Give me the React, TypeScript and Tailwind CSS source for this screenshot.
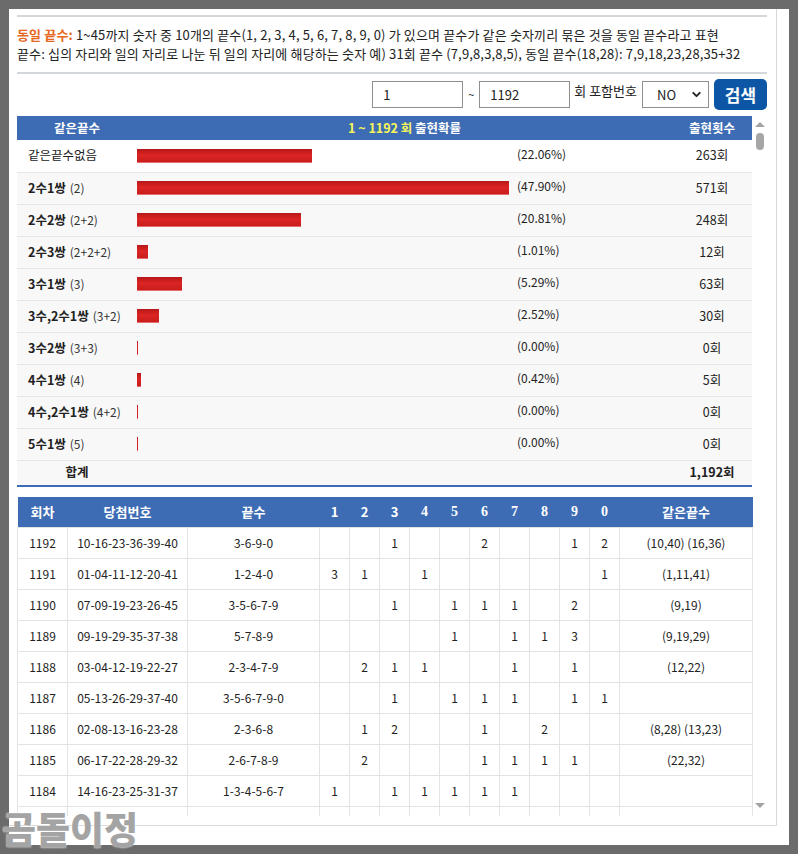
import { ChevronDown } from "lucide-react";

type StatRow = {
  name: string;
  sub?: string;
  bold: boolean;
  bar: number;
  pct: string;
  count: string;
};

const stats: StatRow[] = [
  { name: "같은끝수없음", bold: false, bar: 175, pct: "(22.06%)", count: "263회" },
  { name: "2수1쌍", sub: "(2)", bold: true, bar: 372, pct: "(47.90%)", count: "571회" },
  { name: "2수2쌍", sub: "(2+2)", bold: true, bar: 164, pct: "(20.81%)", count: "248회" },
  { name: "2수3쌍", sub: "(2+2+2)", bold: true, bar: 11, pct: "(1.01%)", count: "12회" },
  { name: "3수1쌍", sub: "(3)", bold: true, bar: 45, pct: "(5.29%)", count: "63회" },
  { name: "3수,2수1쌍", sub: "(3+2)", bold: true, bar: 22, pct: "(2.52%)", count: "30회" },
  { name: "3수2쌍", sub: "(3+3)", bold: true, bar: 1, pct: "(0.00%)", count: "0회" },
  { name: "4수1쌍", sub: "(4)", bold: true, bar: 4, pct: "(0.42%)", count: "5회" },
  { name: "4수,2수1쌍", sub: "(4+2)", bold: true, bar: 1, pct: "(0.00%)", count: "0회" },
  { name: "5수1쌍", sub: "(5)", bold: true, bar: 1, pct: "(0.00%)", count: "0회" },
];

// digit counts in order 1..9,0 ("" = none)
const draws = [
  { no: "1192", nums: "10-16-23-36-39-40", ends: "3-6-9-0", d: ["", "", "1", "", "", "2", "", "", "1", "2"], same: "(10,40) (16,36)" },
  { no: "1191", nums: "01-04-11-12-20-41", ends: "1-2-4-0", d: ["3", "1", "", "1", "", "", "", "", "", "1"], same: "(1,11,41)" },
  { no: "1190", nums: "07-09-19-23-26-45", ends: "3-5-6-7-9", d: ["", "", "1", "", "1", "1", "1", "", "2", ""], same: "(9,19)" },
  { no: "1189", nums: "09-19-29-35-37-38", ends: "5-7-8-9", d: ["", "", "", "", "1", "", "1", "1", "3", ""], same: "(9,19,29)" },
  { no: "1188", nums: "03-04-12-19-22-27", ends: "2-3-4-7-9", d: ["", "2", "1", "1", "", "", "1", "", "1", ""], same: "(12,22)" },
  { no: "1187", nums: "05-13-26-29-37-40", ends: "3-5-6-7-9-0", d: ["", "", "1", "", "1", "1", "1", "", "1", "1"], same: "" },
  { no: "1186", nums: "02-08-13-16-23-28", ends: "2-3-6-8", d: ["", "1", "2", "", "", "1", "", "2", "", ""], same: "(8,28) (13,23)" },
  { no: "1185", nums: "06-17-22-28-29-32", ends: "2-6-7-8-9", d: ["", "2", "", "", "", "1", "1", "1", "1", ""], same: "(22,32)" },
  { no: "1184", nums: "14-16-23-25-31-37", ends: "1-3-4-5-6-7", d: ["1", "", "1", "1", "1", "1", "1", "", "", ""], same: "" },
  { no: "", nums: "", ends: "", d: ["", "", "", "", "", "", "", "", "", ""], same: "" },
];

const digitHeads = ["1", "2", "3", "4", "5", "6", "7", "8", "9", "0"];

function SearchBar() {
  return (
    <div className="mt-[5px] flex h-[31px] w-[750px] items-center justify-end text-[13px] text-[#222]">
      <div className="flex h-[27px] w-[91px] items-center border border-[#8f8f8f] pl-[10px]">1</div>
      <span className="mx-[5px] text-[11px]">~</span>
      <div className="flex h-[27px] w-[91px] items-center border border-[#8f8f8f] pl-[10px]">1192</div>
      <span className="ml-[4px] mr-[5px] self-start pt-[2px] text-[13px]">회 포함번호</span>
      <div className="flex h-[27px] w-[67px] items-center justify-between border border-[#8f8f8f] pl-[14px] pr-[5px]">
        <span>NO</span>
        <ChevronDown size={13} strokeWidth={3.5} className="text-[#222]" />
      </div>
      <button className="ml-[5px] flex h-[31px] w-[53px] items-center justify-center rounded-[5px] bg-[#0c56a5] text-[17px] font-bold text-white">
        검색
      </button>
    </div>
  );
}

function StatTable() {
  return (
    <table className="w-[735px] table-fixed border-collapse border-b-2 border-[#3e6cb4] text-[12.5px] text-[#222]">
      <colgroup>
        <col className="w-[120px]" />
        <col className="w-[380px]" />
        <col className="w-[155px]" />
        <col className="w-[80px]" />
      </colgroup>
      <thead>
        <tr className="h-[24px] bg-[#3e6cb4] text-[12.5px] text-white">
          <th className="font-bold">같은끝수</th>
          <th colSpan={2} className="font-bold">
            <span className="text-[#f6f65a]">1 ~ 1192 회</span> 출현확률
          </th>
          <th className="font-bold">출현횟수</th>
        </tr>
      </thead>
      <tbody>
        {stats.map((s, i) => (
          <tr key={s.name} className={`h-[32px] border-b border-[#e6e6e6] ${i === 0 ? "bg-white" : "bg-[#f8f8f8]"}`}>
            <td className="pl-[11px]">
              <span className={s.bold ? "font-bold" : ""}>{s.name}</span>
              {s.sub && <span className="ml-[4px] text-[12px] text-[#333]">{s.sub}</span>}
            </td>
            <td className="p-0">
              <div
                className="h-[14px] border-b border-[#e96a6a] bg-gradient-to-b from-[#b81818] via-[#dc2424] to-[#c91d1d]"
                style={{ width: s.bar }}
              />
            </td>
            <td className="pb-[4px] text-[12px]">{s.pct}</td>
            <td className="text-center">{s.count}</td>
          </tr>
        ))}
        <tr className="h-[26px] bg-[#f8f8f8] font-bold">
          <td className="text-center">합계</td>
          <td />
          <td />
          <td className="text-center">1,192회</td>
        </tr>
      </tbody>
    </table>
  );
}

function DrawTable() {
  return (
    <table className="mt-[10px] w-[735px] table-fixed border-collapse text-[12px] text-[#222]">
      <colgroup>
        <col className="w-[50px]" />
        <col className="w-[120px]" />
        <col className="w-[132px]" />
        {digitHeads.map((h) => (
          <col key={h} className="w-[30px]" />
        ))}
        <col className="w-[133px]" />
      </colgroup>
      <thead>
        <tr className="h-[30px] bg-[#3e6cb4] text-[13px] text-white">
          <th className="font-bold">회차</th>
          <th className="font-bold">당첨번호</th>
          <th className="font-bold">끝수</th>
          {digitHeads.map((h, i) => (
            <th key={h} className={i < 3 ? "font-bold" : "font-['Liberation_Serif',serif] text-[14px] font-bold"}>
              {h}
            </th>
          ))}
          <th className="font-bold">같은끝수</th>
        </tr>
      </thead>
      <tbody>
        {draws.map((r, i) => (
          <tr key={i} className="h-[31px] bg-white">
            <td className="border border-[#e3e3e3] text-center">{r.no}</td>
            <td className="border border-[#e3e3e3] text-center">{r.nums}</td>
            <td className="border border-[#e3e3e3] text-center">{r.ends}</td>
            {r.d.map((v, j) => (
              <td key={j} className="border border-[#e3e3e3] text-center">
                {v}
              </td>
            ))}
            <td className="border border-[#e3e3e3] text-center">{r.same}</td>
          </tr>
        ))}
      </tbody>
    </table>
  );
}

function FakeScrollbar() {
  return (
    <div className="flex h-full w-[14px] flex-col items-center pt-[6px]">
      <div className="h-0 w-0 border-x-[5px] border-b-[5px] border-x-transparent border-b-[#a3a3a3]" />
      <div className="mt-[6px] h-[17px] w-[8px] rounded-[4px] bg-[#a6a6a6]" />
      <div className="flex-1" />
      <div className="mb-[8px] h-0 w-0 border-x-[5px] border-t-[5px] border-x-transparent border-t-[#a3a3a3]" />
    </div>
  );
}

export default function App() {
  return (
    <div className="h-[854px] w-[798px] bg-[#6b6b6b] pl-[9px] pt-[9px] font-['Noto_Sans_CJK_KR',sans-serif]">
      <div className="relative h-[836px] w-[780px] bg-white">
        <div className="h-[817px] w-[768px] border-b border-r border-[#d9d9d9] pl-[8px] pt-[6px]">
          <div className="h-[2px] w-[750px] bg-[#d3d7dc]" />
          <p className="mt-[8px] whitespace-nowrap text-[13px] leading-[19px] tracking-[0.15px] text-[#222]">
            <b className="text-[#e5681f]">동일 끝수:</b> 1~45까지 숫자 중 10개의 끝수(1, 2, 3, 4, 5, 6, 7, 8, 9, 0) 가 있으며 끝수가 같은 숫자끼리 묶은 것을 동일 끝수라고 표현
            <br />
            끝수: 십의 자리와 일의 자리로 나눈 뒤 일의 자리에 해당하는 숫자 예) 31회 끝수 (7,9,8,3,8,5), 동일 끝수(18,28): 7,9,18,23,28,35+32
          </p>
          <div className="mt-[9px] h-[2px] w-[750px] bg-[#d3d7dc]" />
          <SearchBar />

          <div className="mt-[6px] flex h-[700px] w-[750px]">
            <div className="w-[736px] overflow-hidden">
              <StatTable />
              <DrawTable />
            </div>
            <FakeScrollbar />
          </div>
        </div>

        <div className="absolute left-[-7px] top-[792px] text-[37px] font-black text-[#a4a4a4] [text-shadow:0_0_2px_#fff]">
          곰돌이정
        </div>
      </div>
    </div>
  );
}
